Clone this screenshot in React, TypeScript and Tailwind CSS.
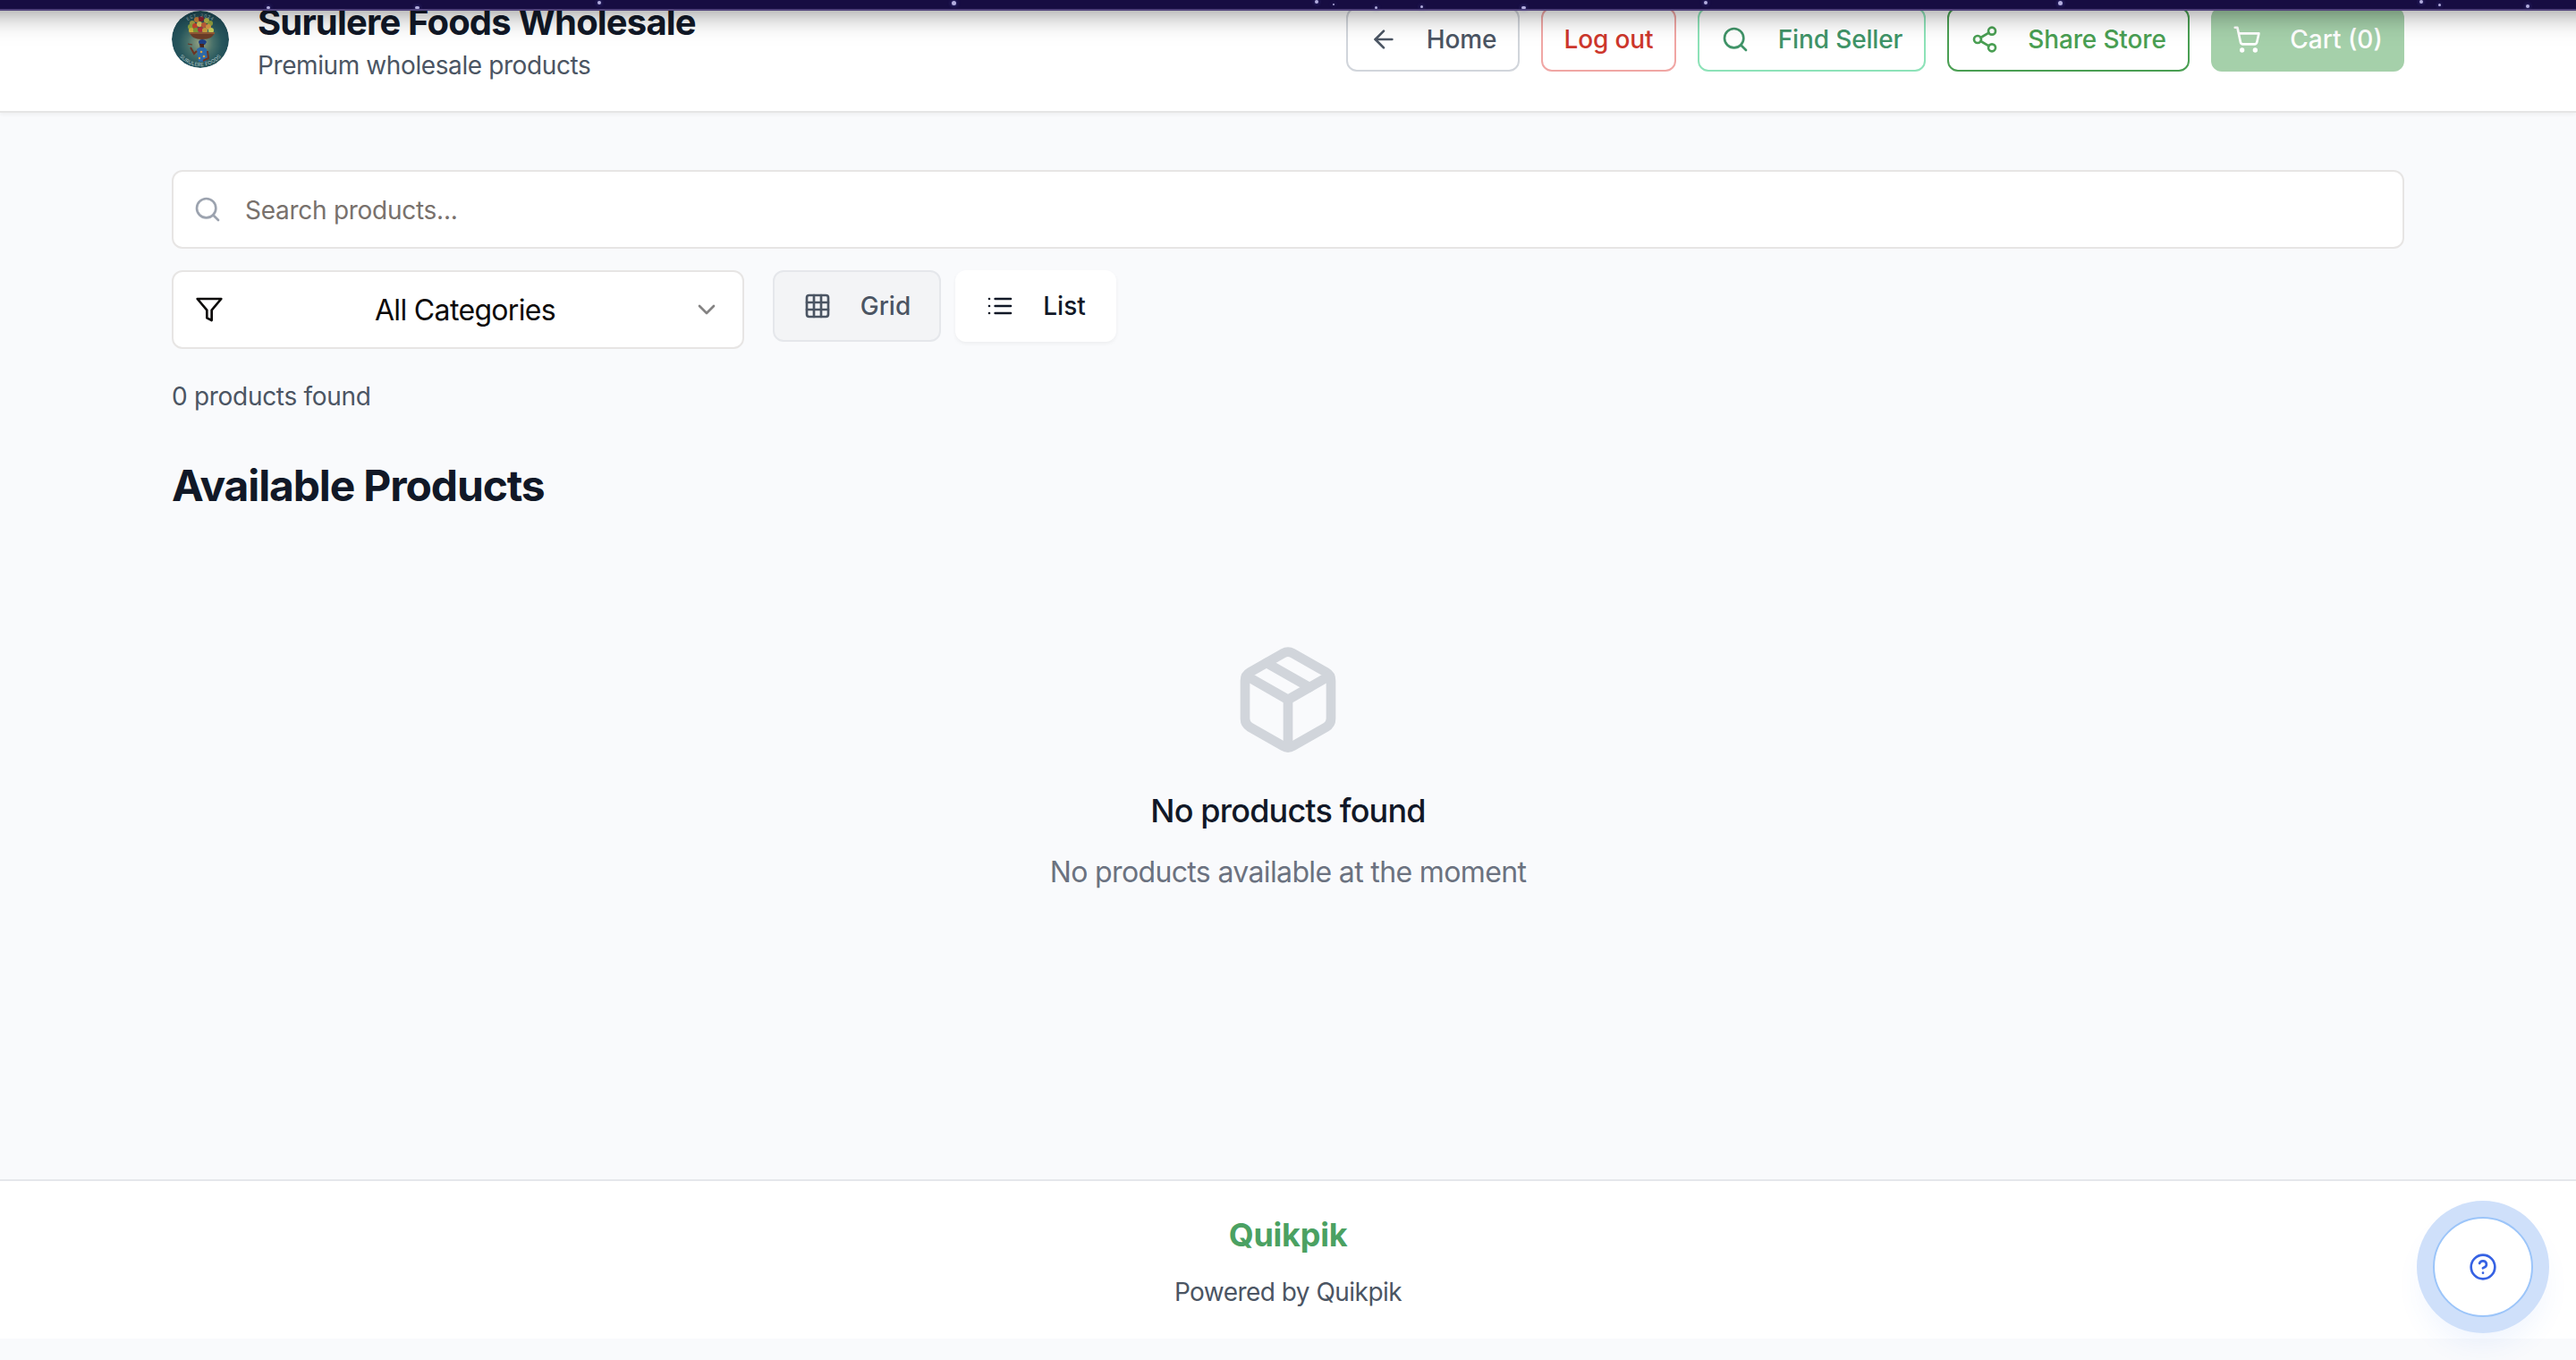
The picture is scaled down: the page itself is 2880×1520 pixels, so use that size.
import React from "react";
import { ArrowLeft, ChevronDown, CircleHelp, Grid3x3, Package, Search, Share2, ShoppingCart } from "lucide-react";

const stars = [
  [298, 7, 4], [464, 7, 5], [668, 1, 4], [1064, 1, 5],
  [1470, 0, 4], [1490, 4, 2], [1588, 6, 3],
  [1537, 7, 3], [1701, 7, 5], [1905, 1, 4], [2301, 1, 5],
  [2705, 0, 4], [2726, 4, 3], [2824, 5, 4],
];

const fruits: [number, number, string][] = [
  [23, 14, "#a9a344"], [28, 10, "#c97f3a"], [33, 9, "#8a2030"], [39, 11, "#b9b94a"], [43, 14, "#96a53f"],
  [21, 18, "#8fa63f"], [26, 17, "#c8452f"], [31, 15, "#d9c95c"], [36, 16, "#c4603a"], [41, 18, "#d99a4a"],
  [22, 22, "#d4b43c"], [27, 22, "#7f9a3a"], [32, 21, "#b8313a"], [37, 22, "#c9a13f"], [44, 22, "#c9cf5a"],
];

function Avatar() {
  return (
    <svg viewBox="0 0 64 64" className="size-16 shrink-0 rounded-full">
      <defs>
        <radialGradient id="glow" cx="50%" cy="56%" r="50%">
          <stop offset="0" stopColor="#9aa584" />
          <stop offset="0.45" stopColor="#47706a" />
          <stop offset="0.75" stopColor="#28575d" />
          <stop offset="1" stopColor="#214e58" />
        </radialGradient>
        <path id="arcTop" d="M8 25 A25 25 0 0 1 56 25" />
        <path id="arcBottom" d="M4 43 A30 30 0 0 0 60 43" />
      </defs>
      <circle cx="32" cy="32" r="32" fill="url(#glow)" />
      {fruits.map(([x, y, c], i) => (
        <circle key={i} cx={x} cy={y} r="3" fill={c} />
      ))}
      <path d="M20 24h28c-1 5-6 8-14 8s-13-3-14-8z" fill="#6b3d28" />
      <path d="M20 25h28" stroke="#a0653a" strokeWidth="1.5" />
      <path d="M30 35c0-4 8-4 9 0l-2 3h-6z" fill="#1e3f86" />
      <path d="M31 37h5v6h-4z" fill="#4b251b" />
      <path d="M28 43c3-3 8-3 11 0l2 7-3 7h-8l-1-6z" fill="#2d69a8" />
      <path d="M28 45l-3 3-4-7M40 45l1 8-6 3" stroke="#6b3423" strokeWidth="2" fill="none" />
      <circle cx="33" cy="46" r="1.3" fill="#d9a53f" />
      <circle cx="36" cy="51" r="1.3" fill="#d9a53f" />
      <circle cx="31" cy="53" r="1.2" fill="#d9a53f" />
      <path d="M18 37l5 1" stroke="#6b3423" strokeWidth="1.2" />
      <text fill="#9db6b8" fontSize="5" letterSpacing="0.6" textAnchor="middle">
        <textPath href="#arcTop" startOffset="50%">EST. 2024</textPath>
      </text>
      <text fill="#b3c7c8" fontSize="5.6" letterSpacing="0.2" textAnchor="middle">
        <textPath href="#arcBottom" startOffset="50%">SURULERE FOODS</textPath>
      </text>
    </svg>
  );
}

function FilterIcon() {
  return (
    <svg viewBox="0 0 24 24" className="mr-4 size-8" fill="none" stroke="currentColor" strokeWidth="2" strokeLinecap="round" strokeLinejoin="round">
      <polygon points="22 3 2 3 10 12.46 10 19 14 21 14 12.46 22 3" />
    </svg>
  );
}

function ListIcon() {
  return (
    <svg viewBox="0 0 24 24" className="size-8" fill="none" stroke="currentColor" strokeWidth="2" strokeLinecap="round">
      <path d="M8 6h13M8 12h13M8 18h13M3 6h.01M3 12h.01M3 18h.01" />
    </svg>
  );
}

const button = "flex h-[72px] items-center justify-center gap-8 rounded-[12px] border-2 whitespace-nowrap";

export default function App() {
  return (
    <div className="relative flex h-[1520px] w-[2880px] flex-col overflow-hidden bg-[#f9fafc] font-['Inter',sans-serif] text-[28px] leading-10 text-[#4b5563]">
      <div className="absolute -inset-x-10 -top-10 z-10 h-[52px] border-b-2 border-[#51437a] bg-[#170d42] shadow-[0_0_32px_rgba(0,0,0,0.5)]">
        <div className="absolute top-10 left-10">
          {stars.map(([x, y, s]) => (
            <span key={x} className="absolute rounded-full bg-[#b4aede] shadow-[0_0_4px_#4b4aa0]" style={{ left: x, top: y, width: s, height: Math.min(s, 10 - y) }} />
          ))}
        </div>
      </div>

      <header className="flex h-[126px] shrink-0 items-center justify-between border-b-2 border-[#e5e5e5] bg-white px-48 pb-9 shadow-[0_2px_4px_rgba(0,0,0,0.05)]">
        <div className="flex items-center gap-8">
          <Avatar />
          <div className="pt-0.5">
            <h1 className="text-[40px] leading-[56px] font-bold tracking-[-0.84px] text-[#111827]">Surulere Foods Wholesale</h1>
            <p className="tracking-[-0.4px]">Premium wholesale products</p>
          </div>
        </div>
        <nav className="flex items-center gap-6 font-medium tracking-[-0.15px]">
          <button className={`${button} w-[194px] border-[#d1d5db]`}><ArrowLeft className="size-8" />Home</button>
          <button className={`${button} w-[151px] border-[#f0a6a4] text-[#cd372c]`}>Log out</button>
          <button className={`${button} w-[255px] border-[#8de2b8] text-[#409468]`}><Search className="size-8" />Find Seller</button>
          <button className={`${button} w-[271px] border-[#4a9f53] text-[#4a9f53]`}><Share2 className="size-8" />Share Store</button>
          <button className="flex h-[72px] w-[216px] items-center justify-center gap-8 rounded-[12px] bg-[#a5d0aa] tracking-normal whitespace-nowrap text-white"><ShoppingCart className="size-8" />Cart (0)</button>
        </nav>
      </header>

      <main className="flex flex-1 flex-col px-48 pt-16">
        <div className="flex h-[88px] items-center gap-[26px] rounded-[12px] border-2 border-[#e7e5e4] bg-white px-[22px] text-[#78716c]">
          <Search className="size-8 text-[#9ca3af]" />
          <span className="pt-0.5 tracking-[-0.27px]">Search products...</span>
        </div>
        <div className="mt-6 flex items-start">
          <button className="flex h-[88px] w-[640px] items-center justify-between rounded-[12px] border-2 border-[#e7e5e4] bg-white px-6 text-[32px] text-[#0c0a09]">
            <FilterIcon />
            <span className="pt-0.5 tracking-[-0.66px]">All Categories</span>
            <ChevronDown className="size-8 opacity-50" />
          </button>
          <div className="ml-8 flex gap-4 font-medium">
            <button className="flex h-20 w-[188px] items-center justify-center gap-8 rounded-[12px] border-2 border-[#e5e7eb] bg-[#f3f4f6]"><Grid3x3 className="size-8" />Grid</button>
            <button className="flex h-20 w-[180px] items-center justify-center gap-8 rounded-[12px] bg-white text-[#111827] shadow-[0_2px_4px_rgba(0,0,0,0.05)]"><ListIcon />List</button>
          </div>
        </div>
        <p className="mt-[33px] tracking-[-0.3px]">0 products found</p>
        <h2 className="mt-12 text-[48px] leading-[64px] font-bold tracking-[-1.15px] text-[#111827]">Available Products</h2>
        <section className="mt-[143px] flex flex-col items-center">
          <Package className="size-32 text-[#d1d5db]" />
          <h3 className="mt-8 text-[36px] leading-[56px] font-medium tracking-[-0.82px] text-[#111827]">No products found</h3>
          <p className="mt-[17px] text-[32px] leading-[48px] tracking-[-0.64px] text-[#6b7280]">No products available at the moment</p>
        </section>
      </main>

      <footer className="mb-6 flex h-[178px] shrink-0 flex-col items-center border-t-2 border-[#e5e7eb] bg-white pt-8">
        <strong className="text-[36px] leading-[56px] font-bold tracking-[-0.25px] text-[#4ba162]">Quikpik</strong>
        <p className="mt-4 tracking-[-0.53px]">Powered by Quikpik</p>
      </footer>

      <button className="absolute top-[1342px] left-[2702px] flex size-[148px] items-center justify-center rounded-full bg-[#cfe0fa] shadow-[0_20px_30px_-6px_rgba(59,130,246,0.08)]">
        <span className="flex size-28 items-center justify-center rounded-full border-2 border-[#9cc5f9] bg-white text-[#3662e3]">
          <CircleHelp className="size-8" />
        </span>
      </button>
    </div>
  );
}
